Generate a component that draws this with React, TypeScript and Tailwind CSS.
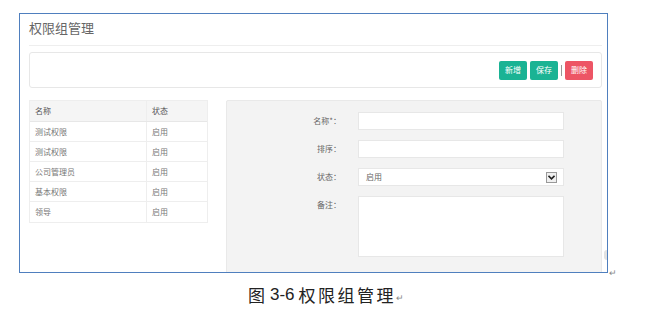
import React from 'react';

const rows = ['测试权限', '测试权限', '公司管理员', '基本权限', '领导'];

const fields = [
  { label: '名称*：', kind: 'input' },
  { label: '排序：', kind: 'input' },
  { label: '状态：', kind: 'select' },
  { label: '备注：', kind: 'textarea' },
];

export default function App() {
  return (
    <div className="w-[650px] h-[317px] bg-white overflow-hidden" style={{ fontFamily: '"Noto Sans CJK SC", "Noto Sans", sans-serif' }}>
      <div className="flex items-end pt-[13px] pl-[19px]">
        {/* Screenshot frame */}
        <div className="relative w-[589px] h-[260px] border border-[#4f7fbe] overflow-hidden pl-[9px] pr-[5px]">
          <h1 className="pt-[4px] text-[13px] leading-[20px] text-[#666] font-normal">权限组管理</h1>
          <div className="mt-[7px] border-t border-[#eeeeee]"></div>

          {/* Toolbar */}
          <div className="mt-[6px] h-[36px] border border-[#e7e7e7] rounded-[3px] flex items-center justify-end pr-[8px]">
            <button className="w-[28px] h-[19px] bg-[#1ab394] text-white text-[8px] rounded-[2px] leading-none">新增</button>
            <button className="ml-[3px] w-[28px] h-[19px] bg-[#1ab394] text-white text-[8px] rounded-[2px] leading-none">保存</button>
            <span className="mx-[3px] w-px h-[11px] bg-[#999]"></span>
            <button className="w-[28px] h-[19px] bg-[#ed5565] text-white text-[8px] rounded-[2px] leading-none">删除</button>
          </div>

          <div className="mt-[12px] flex gap-[18px]">
            {/* Table */}
            <div className="w-[179px] self-start border border-[#eeeeee] text-[8px] text-[#777]">
              <div className="flex h-[21px] bg-[#f5f5f5] border-b border-[#e7e7e7] text-[#555]">
                <div className="w-[117px] pl-[5px] flex items-center border-r border-[#eeeeee]">名称</div>
                <div className="flex-1 pl-[5px] flex items-center">状态</div>
              </div>
              {rows.map((r, i) => (
                <div key={i} className={`flex h-[20px] ${i < rows.length - 1 ? 'border-b border-[#eeeeee]' : ''}`}>
                  <div className="w-[117px] pl-[5px] flex items-center border-r border-[#eeeeee]">{r}</div>
                  <div className="flex-1 pl-[5px] flex items-center">启用</div>
                </div>
              ))}
            </div>

            {/* Form panel */}
            <div className="w-[376px] h-[200px] bg-[#f3f3f3] border border-[#e9e9e9] rounded-[2px] pt-[11px]">
              <div className="flex flex-col gap-[10px]">
                {fields.map(f => (
                  <div key={f.label} className="flex items-start">
                    <label className="w-[114px] h-[18px] flex items-center justify-end text-[8px] text-[#666]">{f.label}</label>
                    <div className="ml-[17px]">
                      {f.kind === 'textarea' ? (
                        <div className="w-[206px] h-[61px] bg-white border border-[#e7e7e7]"></div>
                      ) : f.kind === 'select' ? (
                        <div className="w-[206px] h-[18px] bg-white border border-[#e7e7e7] flex items-center justify-between pl-[7px] pr-[6px]">
                          <span className="text-[8px] text-[#666]">启用</span>
                          <span className="w-[11px] h-[11px] border border-[#999] bg-[#f0f0f0] flex items-center justify-center">
                            <svg width="7" height="5" viewBox="0 0 7 5">
                              <path d="M0.5 0.8 L3.5 3.8 L6.5 0.8" fill="none" stroke="#222" strokeWidth="1.6" />
                            </svg>
                          </span>
                        </div>
                      ) : (
                        <div className="w-[206px] h-[18px] bg-white border border-[#e7e7e7]"></div>
                      )}
                    </div>
                  </div>
                ))}
              </div>
            </div>
          </div>

          {/* scroll handle peeking at the right edge */}
          <span className="absolute right-0 top-[236px] w-[3px] h-[10px] bg-[#e2e2e2] rounded-l-full"></span>
        </div>
        <span className="ml-[1px] mb-[-4px] text-[9px] leading-none text-[#888]">↵</span>
      </div>

      {/* Caption */}
      <div className="pl-[248px] mt-[12px] flex items-end text-[17px] leading-[20px] text-[#222]">
        <span>图</span>
        <span className="ml-[5px]" style={{ fontFamily: '"Liberation Sans", sans-serif' }}>3-6</span>
        <span className="ml-[4px] tracking-[2.5px]">权限组管理</span>
        <span className="text-[9px] text-[#888] leading-[14px]">↵</span>
      </div>
    </div>
  );
}
